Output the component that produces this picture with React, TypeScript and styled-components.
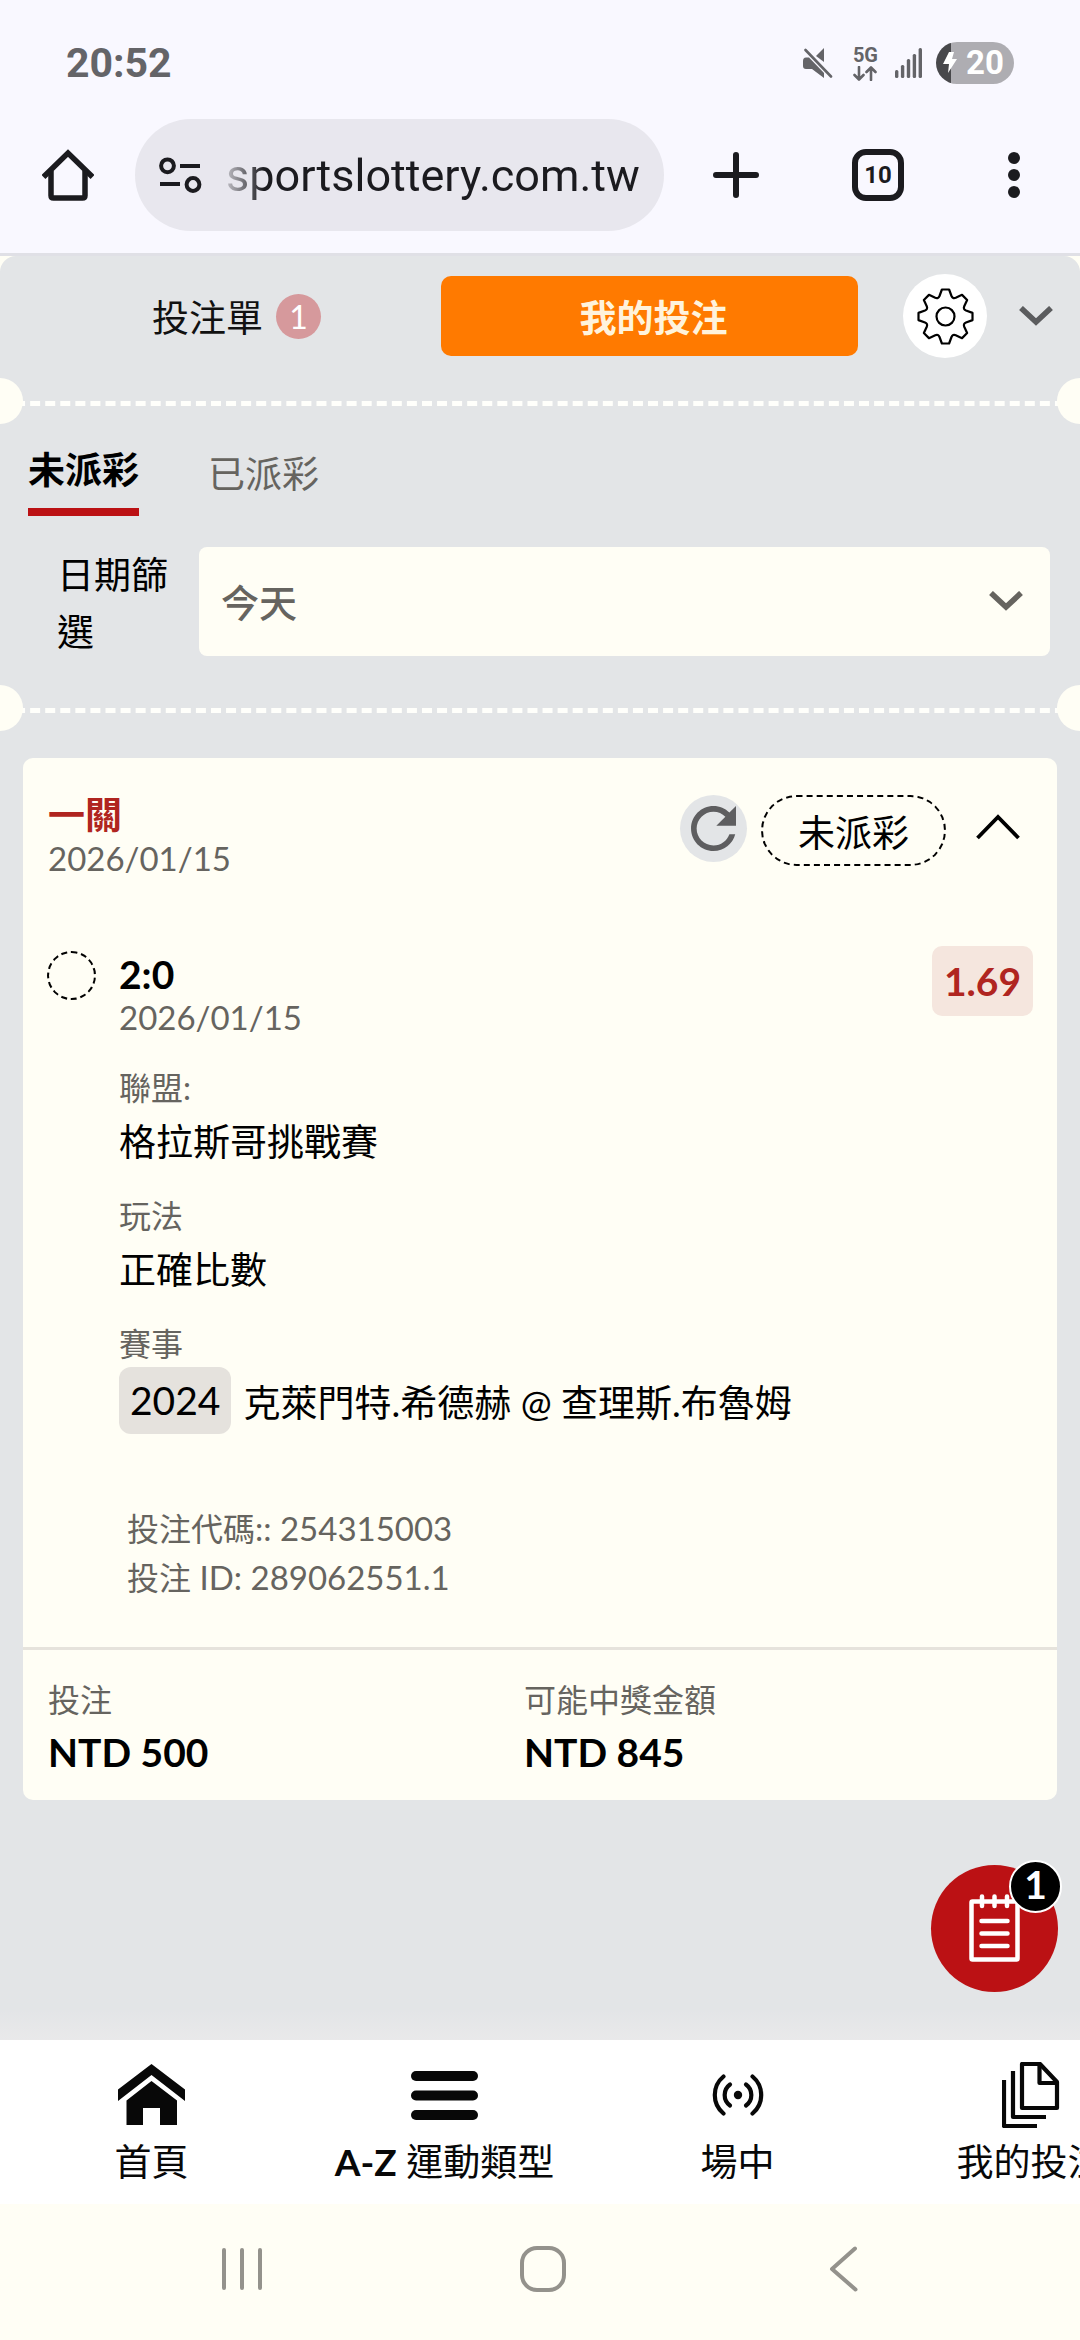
import React from 'react';
import styled, { createGlobalStyle, css } from 'styled-components';

const c = {
  chrome: '#f9f8ff',
  chromeInk: '#1b1b1f',
  chromeField: '#e8e7ee',
  status: '#646468',
  slip: '#e3e5e7',
  paper: '#fffef5',
  ink: '#000000',
  muted: '#66645f',
  red: '#bb1114',
  redText: '#b02520',
  orange: '#ff7a00',
};

const GlobalStyle = createGlobalStyle`
  *, *::before, *::after { box-sizing: border-box; }
  body {
    margin: 0;
    background: ${c.paper};
    color: ${c.ink};
    font-family: Lato, "Noto Sans CJK TC", sans-serif;
    font-size: 37px;
    line-height: 48px;
  }
  button, input, select { font: inherit; color: inherit; }
  svg { display: block; flex: none; }
`;

const plainButton = css`
  display: flex;
  align-items: center;
  justify-content: center;
  margin: 0;
  padding: 0;
  border: 0;
  background: none;
  cursor: pointer;
`;

const Screen = styled.div`
  display: flex;
  flex-direction: column;
  min-height: 100vh;
`;

/* ---------- browser chrome ---------- */

const BrowserChrome = styled.header`
  background: ${c.chrome};
  border-bottom: 3px solid #e0e0e6;
`;

const StatusBar = styled.div`
  display: flex;
  align-items: center;
  justify-content: space-between;
  padding: 42px 66px 0;
  color: ${c.status};
  font-family: Roboto, sans-serif;
`;

const Clock = styled.time`
  font-size: 41px;
  font-weight: 700;
  line-height: 42px;
`;

const StatusIcons = styled.div`
  display: flex;
  align-items: center;
`;

const Network = styled.div`
  display: flex;
  flex-direction: column;
  align-items: center;
  gap: 1px;
  margin: 0 17px 0 20px;
  font-size: 20px;
  font-weight: 700;
  line-height: 20px;
`;

const Battery = styled.div`
  display: flex;
  align-items: center;
  gap: 9px;
  width: 78px;
  height: 42px;
  margin-left: 14px;
  padding-left: 7px;
  border-radius: 21px;
  background: linear-gradient(90deg, #48484b 15px, #aeadb2 15px);
  color: #fff;
  font-size: 33px;
  font-weight: 700;
  line-height: 42px;
`;

const Toolbar = styled.div`
  display: flex;
  align-items: center;
  padding: 35px 0 22px 42px;
  color: ${c.chromeInk};
`;

const ToolButton = styled.button<{ $width: number }>`
  ${plainButton}
  width: ${(p) => p.$width}px;
  height: 96px;
`;

const AddressPill = styled.div`
  display: flex;
  align-items: center;
  flex: 1;
  min-width: 0;
  height: 112px;
  margin-left: 41px;
  padding: 0 16px 0 24px;
  border-radius: 56px;
  background: ${c.chromeField};
`;

const AddressInput = styled.input`
  flex: 1;
  min-width: 0;
  margin-left: 24px;
  padding: 2px 0 0;
  border: 0;
  outline: 0;
  background: none;
  font-family: Roboto, sans-serif;
  font-size: 45px;
  line-height: 56px;
  mask-image: linear-gradient(90deg, rgba(0, 0, 0, 0.2), #000 38px);
`;

const TabCount = styled.span`
  display: flex;
  align-items: center;
  justify-content: center;
  width: 52px;
  height: 52px;
  border: 6px solid ${c.chromeInk};
  border-radius: 14px;
  font-family: Roboto, sans-serif;
  font-size: 24px;
  font-weight: 700;
  line-height: 40px;
`;

/* ---------- bet slip ---------- */

const Slip = styled.main`
  position: relative;
  flex: 1;
  overflow: hidden;
  padding-bottom: 240px;
  border-radius: 16px 16px 0 0;
  background: ${c.slip};
`;

const SlipHeader = styled.div`
  display: flex;
  align-items: center;
  padding: 18px 27px 43px 24px;
`;

const SlipTab = styled.button<{ $active?: boolean }>`
  ${plainButton}
  flex: 1;
  gap: 13px;
  height: 80px;
  padding: 4px 0 0 8px;
  border-radius: 10px;
  background: ${(p) => (p.$active ? c.orange : 'transparent')};
  color: ${(p) => (p.$active ? '#fff3dc' : '#111')};
  font-weight: ${(p) => (p.$active ? 700 : 400)};
`;

const SlipCount = styled.span`
  width: 45px;
  height: 45px;
  margin-bottom: 4px;
  border-radius: 50%;
  background: #d6999c;
  color: #fff;
  font-size: 32px;
  line-height: 45px;
`;

const SettingsButton = styled.button`
  ${plainButton}
  width: 84px;
  height: 84px;
  margin: 0 32px 0 45px;
  border-radius: 50%;
  background: #fff;
`;

const CollapseButton = styled.button`
  ${plainButton}
  height: 84px;
  color: #5b5c5e;
`;

const Perforation = styled.hr`
  position: relative;
  height: 5px;
  margin: 0;
  border: 0;
  border-top: 5px dashed #fffffb;
  overflow: visible;

  &::before,
  &::after {
    content: '';
    position: absolute;
    top: -28px;
    width: 46px;
    height: 46px;
    border-radius: 50%;
    background: ${c.paper};
  }
  &::before { left: -23px; }
  &::after { right: -23px; }
`;

const StatusTabs = styled.div`
  display: flex;
  align-items: flex-start;
  gap: 69px;
  padding: 40px 28px 0;
`;

const StatusTab = styled.button<{ $active?: boolean }>`
  ${plainButton}
  line-height: 56px;
  color: ${c.muted};
  ${(p) =>
    p.$active &&
    css`
      padding-bottom: 14px;
      border-bottom: 8px solid ${c.red};
      color: ${c.ink};
      font-weight: 700;
      line-height: 48px;
    `}
`;

const FilterRow = styled.div`
  display: flex;
  align-items: center;
  gap: 30px;
  padding: 26px 30px 48px 57px;
`;

const FilterLabel = styled.label`
  flex: none;
  width: 112px;
  padding-top: 4px;
  line-height: 57px;
`;

const SelectBox = styled.div`
  display: flex;
  align-items: center;
  flex: 1;
  position: relative;
  color: ${c.muted};

  svg {
    position: absolute;
    right: 27px;
    pointer-events: none;
  }
`;

const DateSelect = styled.select`
  appearance: none;
  width: 100%;
  height: 109px;
  padding: 2px 80px 0 22px;
  border: 0;
  border-radius: 8px;
  background: ${c.paper};
  font-size: 38px;
  font-weight: 500;
`;

/* ---------- ticket card ---------- */

const Ticket = styled.article`
  margin: 45px 23px 0;
  border-radius: 10px;
  background: ${c.paper};
`;

const TicketHead = styled.div`
  display: flex;
  justify-content: space-between;
  padding: 33px 37px 69px 25px;
`;

const TicketTitle = styled.h2`
  margin: 0;
  color: ${c.redText};
  font-size: 37px;
  font-weight: 700;
  line-height: 48px;
`;

const DateText = styled.time`
  display: block;
  color: ${c.muted};
  font-size: 33px;
  line-height: 38px;
`;

const TicketActions = styled.div`
  display: flex;
  align-items: flex-start;
  padding-top: 4px;
`;

const RefreshButton = styled.button`
  ${plainButton}
  width: 67px;
  height: 67px;
  border-radius: 50%;
  background: ${c.slip};
  color: #5e5e60;
`;

const StatusPill = styled.span`
  margin: 0 30px 0 14px;
  padding: 4px 35px 0;
  border: 2px dashed ${c.ink};
  border-radius: 36px;
  line-height: 63px;
`;

const ToggleButton = styled.button`
  ${plainButton}
  height: 64px;
`;

const Leg = styled.section`
  display: grid;
  grid-template-columns: 49px 1fr auto;
  column-gap: 23px;
  padding: 0 24px 45px;
`;

const LegMarker = styled.span`
  width: 49px;
  height: 49px;
  margin-top: 5px;
  border: 2px dashed ${c.ink};
  border-radius: 50%;
`;

const LegBody = styled.div`
  padding-top: 4px;
`;

const LegTitle = styled.h3`
  margin: 0;
  font-size: 39px;
  font-weight: 700;
  line-height: 48px;
`;

const Odds = styled.span`
  align-self: start;
  padding: 0 12px;
  border-radius: 10px;
  background: #f5e6de;
  color: ${c.redText};
  font-size: 39px;
  font-weight: 700;
  line-height: 70px;
`;

const Fields = styled.dl`
  display: grid;
  gap: 24px;
  margin: 32px 0 70px;
`;

const FieldName = styled.dt`
  color: ${c.muted};
  font-size: 32px;
  line-height: 40px;
`;

const FieldValue = styled.dd`
  margin: 0;
  padding-top: 4px;
  line-height: 60px;
`;

const MatchValue = styled.dd`
  display: flex;
  align-items: center;
  gap: 12px;
  margin: 3px 0 0;
`;

const MatchCode = styled.span`
  padding: 0 11px;
  border-radius: 12px;
  background: #e5e2dd;
  font-size: 39px;
  line-height: 67px;
`;

const MatchTeams = styled.span`
  padding-top: 4px;
  line-height: 60px;
`;

const Reference = styled.p`
  margin: 0 0 0 8px;
  color: ${c.muted};
  font-size: 32px;
  line-height: 49px;
`;

const Latin = styled.span`
  font-size: 33px;
`;

const Totals = styled.dl`
  display: grid;
  grid-template-columns: 1fr 1fr;
  margin: 0;
  padding: 30px 57px 16px 25px;
  border-top: 3px solid #e6e3dc;
`;

const TotalValue = styled.dd`
  margin: 0;
  font-size: 39px;
  font-weight: 700;
  line-height: 64px;
`;

const SlipFab = styled.button`
  ${plainButton}
  position: absolute;
  right: 22px;
  bottom: 48px;
  width: 127px;
  height: 127px;
  border-radius: 50%;
  background: ${c.red};
  color: #fff;
`;

const FabCount = styled.span`
  position: absolute;
  top: -5px;
  right: -4px;
  width: 53px;
  height: 53px;
  border: 2px solid #fff;
  border-radius: 50%;
  background: #000;
  font-size: 39px;
  font-weight: 700;
  line-height: 44px;
`;

/* ---------- bottom bars ---------- */

const BottomNav = styled.nav`
  position: relative;
  display: flex;
  overflow: hidden;
  padding: 20px 0 18px 5px;
  background: #fff;
  color: #080808;
`;

const NavFade = styled.div`
  height: 30px;
  margin-top: -30px;
  position: relative;
  background: linear-gradient(rgba(236, 236, 236, 0), #e9e9ea);
  pointer-events: none;
`;

const NavLink = styled.a`
  display: flex;
  flex: none;
  flex-direction: column;
  align-items: center;
  gap: 8px;
  width: 293px;
  color: inherit;
  text-decoration: none;
  white-space: nowrap;
`;

const NavIcon = styled.span`
  display: flex;
  align-items: center;
  height: 70px;
`;

const SystemNav = styled.div`
  display: flex;
  justify-content: center;
  height: 136px;
  padding: 0 0 6px 5px;
  background: ${c.paper};
  color: #94928c;
`;

const SystemButton = styled.button`
  ${plainButton}
  width: 28%;
`;

/* ---------- icons ---------- */

const MuteIcon = () => (
  <svg width="30" height="30" viewBox="0 0 30 30" fill="currentColor">
    <path d="M13 8 21 0V14z" />
    <path d="M3 9.500H6L21 25v5L9 21H3Q0 21 0 18v-5Q0 9.500 3 9.500z" />
    <path d="M2.500 2 28 28.500" stroke="currentColor" strokeWidth="2.600" strokeLinecap="round" />
  </svg>
);

const DataArrows = () => (
  <svg width="24" height="15" viewBox="0 0 24 15" fill="none" stroke="currentColor" strokeWidth="2.600" strokeLinecap="round" strokeLinejoin="round">
    <path d="M6 1v12M1.500 9 6 13.500 10.500 9M18 14V2M13.500 6 18 1.500 22.500 6" />
  </svg>
);

const SignalIcon = () => (
  <svg width="27" height="30" viewBox="0 0 27 30" fill="currentColor">
    {[22, 17, 11, 6, 0].map((y, i) => (
      <rect key={y} x={i * 5.9} y={y} width="3.400" height={30 - y} rx="1.500" />
    ))}
  </svg>
);

const BoltIcon = () => (
  <svg width="14" height="22" viewBox="0 0 14 22" fill="currentColor">
    <path d="M6 0H11L9 7H14L5 21 6 12H0z" />
  </svg>
);

const BrowserHomeIcon = () => (
  <svg width="52" height="52" viewBox="0 0 52 52" fill="none" stroke="currentColor" strokeWidth="5.500">
    <path d="M1.500 28 26 4 50.500 28" />
    <path d="M9 22V46.500Q9 49 11.500 49H40.500Q43 49 43 46.500V22" />
  </svg>
);

const TuneIcon = () => (
  <svg width="43" height="37" viewBox="0 0 43 37" fill="none" stroke="currentColor" strokeWidth="4">
    <circle cx="8.500" cy="8.800" r="6.400" />
    <path d="M21 9H41M1 27H21" />
    <circle cx="34" cy="27.500" r="6.400" />
  </svg>
);

const PlusIcon = () => (
  <svg width="46" height="46" viewBox="0 0 46 46" stroke="currentColor" strokeWidth="6" strokeLinecap="round">
    <path d="M23 3V43M3 23H43" />
  </svg>
);

const DotsIcon = () => (
  <svg width="12" height="48" viewBox="0 0 12 48" fill="currentColor">
    <circle cx="6" cy="7" r="6" />
    <circle cx="6" cy="24" r="6" />
    <circle cx="6" cy="41" r="6" />
  </svg>
);

const spin = (x: number, y: number, turn: number) => {
  const a = (turn * Math.PI) / 4;
  const px = x * Math.cos(a) - y * Math.sin(a);
  const py = x * Math.sin(a) + y * Math.cos(a);
  return `${px.toFixed(2)} ${py.toFixed(2)}`;
};

const gearPath = `${Array.from({ length: 8 }, (_, k) => {
  const start = k === 0 ? `M${spin(-6, -20.5, 0)}` : '';
  return `${start}L${spin(-3.6, -27, k)}L${spin(3.6, -27, k)}L${spin(6, -20.5, k)}Q${spin(7.2, -17.5, k)} ${spin(-6, -20.5, k + 1)}`;
}).join('')}Z`;

const GearIcon = () => (
  <svg width="57" height="57" viewBox="-28.500 -28.500 57 57" fill="none" stroke="#000" strokeWidth="2.200" strokeLinejoin="round">
    <path d={gearPath} />
    <circle r="9" />
  </svg>
);

const ChevronDownIcon = () => (
  <svg width="34" height="20" viewBox="0 0 34 20" fill="none" stroke="currentColor" strokeWidth="5.600">
    <path d="M2 2 17 16 32 2" />
  </svg>
);

const ChevronUpIcon = () => (
  <svg width="44" height="26" viewBox="0 0 44 26" fill="none" stroke="currentColor" strokeWidth="3.800">
    <path d="M1.500 24 22 3 42.500 24" />
  </svg>
);

const RefreshIcon = () => (
  <svg width="45" height="45" viewBox="4 4 16 16" fill="currentColor">
    <path d="M17.650 6.350C16.200 4.900 14.210 4 12 4c-4.420 0-7.990 3.580-7.990 8s3.570 8 7.990 8c3.730 0 6.840-2.550 7.730-6h-2.080c-.820 2.330-3.040 4-5.650 4-3.310 0-6-2.690-6-6s2.690-6 6-6c1.660 0 3.140.690 4.220 1.780L13 11h7V4l-2.350 2.350z" />
  </svg>
);

const NotepadIcon = () => (
  <svg width="51" height="69" viewBox="0 0 51 69" fill="none" stroke="currentColor" strokeWidth="4.500" strokeLinecap="round">
    <rect x="2.500" y="7.500" width="46" height="58" rx="1" />
    <path d="M13 2.500V12M25.500 2.500V12M38 2.500V12" />
    <path d="M12.500 27H38.500M12.500 39.500H38.500M12.500 52H38.500" />
  </svg>
);

const HomeIcon = () => (
  <svg width="67" height="62" viewBox="0 0 67 62" fill="currentColor">
    <path d="M33.500 0 67 25.500V37L33.500 11 0 37V25.500z" />
    <path d="M33.500 17 59 36.500V61H42V44H25V61H8.500V36.500z" />
  </svg>
);

const MenuIcon = () => (
  <svg width="67" height="49" viewBox="0 0 67 49" fill="currentColor">
    <rect width="67" height="10" rx="5" />
    <rect y="19.500" width="67" height="10" rx="5" />
    <rect y="39" width="67" height="10" rx="5" />
  </svg>
);

const LiveIcon = () => (
  <svg width="52" height="42" viewBox="0 0 52 42" fill="none" stroke="currentColor" strokeWidth="4.200" strokeLinecap="round">
    <path d="M11.500 2.500A24 24 0 0 0 11.500 39.500M40.500 2.500A24 24 0 0 1 40.500 39.500" />
    <path d="M18 10.500A13 13 0 0 0 18 31.500M34 10.500A13 13 0 0 1 34 31.500" />
    <circle cx="26" cy="21" r="4.200" fill="currentColor" stroke="none" />
  </svg>
);

const DocsIcon = () => (
  <svg width="58" height="66" viewBox="0 0 58 66" fill="none" stroke="currentColor" strokeWidth="4.200" strokeLinejoin="round">
    <path d="M20 2H38L55 20V46H20z" />
    <path d="M37.500 2V21H55" />
    <path d="M11 9V55H44M2 18V64H35" />
  </svg>
);

const RecentsIcon = () => (
  <svg width="40" height="44" viewBox="0 0 40 44" stroke="currentColor" strokeWidth="4" strokeLinecap="round">
    <path d="M2 3V41M20 3V41M38 3V41" />
  </svg>
);

const SystemHomeIcon = () => (
  <svg width="46" height="46" viewBox="0 0 46 46" fill="none" stroke="currentColor" strokeWidth="4">
    <rect x="2" y="2" width="42" height="42" rx="15" />
  </svg>
);

const BackIcon = () => (
  <svg width="29" height="46" viewBox="0 0 29 46" fill="none" stroke="currentColor" strokeWidth="4" strokeLinecap="round" strokeLinejoin="round">
    <path d="M26 2.500 3 23 26.500 43.500" />
  </svg>
);

/* ---------- data ---------- */

const navItems = [
  { icon: <HomeIcon />, label: '首頁' },
  { icon: <MenuIcon />, label: <><b>A-Z</b> 運動類型</> },
  { icon: <LiveIcon />, label: '場中' },
  { icon: <DocsIcon />, label: '我的投注' },
];

const totals = [
  { name: '投注', value: 'NTD 500' },
  { name: '可能中獎金額', value: 'NTD 845' },
];

export default function App() {
  return (
    <Screen>
      <GlobalStyle />

      <BrowserChrome>
        <StatusBar>
          <Clock>20:52</Clock>
          <StatusIcons>
            <MuteIcon />
            <Network>
              5G
              <DataArrows />
            </Network>
            <SignalIcon />
            <Battery>
              <BoltIcon />
              20
            </Battery>
          </StatusIcons>
        </StatusBar>
        <Toolbar>
          <ToolButton $width={52} aria-label="Home"><BrowserHomeIcon /></ToolButton>
          <AddressPill>
            <TuneIcon />
            <AddressInput aria-label="Address" defaultValue="sportslottery.com.tw" />
          </AddressPill>
          <ToolButton $width={144} aria-label="New tab"><PlusIcon /></ToolButton>
          <ToolButton $width={140} aria-label="Tabs"><TabCount>10</TabCount></ToolButton>
          <ToolButton $width={132} aria-label="Menu"><DotsIcon /></ToolButton>
        </Toolbar>
      </BrowserChrome>

      <Slip>
        <SlipHeader>
          <SlipTab>投注單<SlipCount>1</SlipCount></SlipTab>
          <SlipTab $active>我的投注</SlipTab>
          <SettingsButton aria-label="Settings"><GearIcon /></SettingsButton>
          <CollapseButton aria-label="Collapse"><ChevronDownIcon /></CollapseButton>
        </SlipHeader>
        <Perforation />
        <StatusTabs>
          <StatusTab $active>未派彩</StatusTab>
          <StatusTab>已派彩</StatusTab>
        </StatusTabs>
        <FilterRow>
          <FilterLabel htmlFor="date-filter">日期篩選</FilterLabel>
          <SelectBox>
            <DateSelect id="date-filter">
              <option>今天</option>
            </DateSelect>
            <ChevronDownIcon />
          </SelectBox>
        </FilterRow>
        <Perforation />

        <Ticket>
          <TicketHead>
            <div>
              <TicketTitle>一關</TicketTitle>
              <DateText>2026/01/15</DateText>
            </div>
            <TicketActions>
              <RefreshButton aria-label="Refresh"><RefreshIcon /></RefreshButton>
              <StatusPill>未派彩</StatusPill>
              <ToggleButton aria-label="Toggle details"><ChevronUpIcon /></ToggleButton>
            </TicketActions>
          </TicketHead>

          <Leg>
            <LegMarker />
            <LegBody>
              <LegTitle>2:0</LegTitle>
              <DateText>2026/01/15</DateText>
              <Fields>
                <div>
                  <FieldName>聯盟:</FieldName>
                  <FieldValue>格拉斯哥挑戰賽</FieldValue>
                </div>
                <div>
                  <FieldName>玩法</FieldName>
                  <FieldValue>正確比數</FieldValue>
                </div>
                <div>
                  <FieldName>賽事</FieldName>
                  <MatchValue>
                    <MatchCode>2024</MatchCode>
                    <MatchTeams>克萊門特.希德赫 @ 查理斯.布魯姆</MatchTeams>
                  </MatchValue>
                </div>
              </Fields>
              <Reference>投注代碼<Latin>:: 254315003</Latin></Reference>
              <Reference>投注<Latin> ID: 289062551.1</Latin></Reference>
            </LegBody>
            <Odds>1.69</Odds>
          </Leg>

          <Totals>
            {totals.map((t) => (
              <div key={t.name}>
                <FieldName>{t.name}</FieldName>
                <TotalValue>{t.value}</TotalValue>
              </div>
            ))}
          </Totals>
        </Ticket>

        <SlipFab aria-label="Bet slip">
          <NotepadIcon />
          <FabCount>1</FabCount>
        </SlipFab>
      </Slip>

      <NavFade />
      <BottomNav>
        {navItems.map((item, i) => (
          <NavLink key={i} href="#">
            <NavIcon>{item.icon}</NavIcon>
            <span>{item.label}</span>
          </NavLink>
        ))}
      </BottomNav>
      <SystemNav>
        <SystemButton aria-label="Recent apps"><RecentsIcon /></SystemButton>
        <SystemButton aria-label="Home screen"><SystemHomeIcon /></SystemButton>
        <SystemButton aria-label="Back"><BackIcon /></SystemButton>
      </SystemNav>
    </Screen>
  );
}
